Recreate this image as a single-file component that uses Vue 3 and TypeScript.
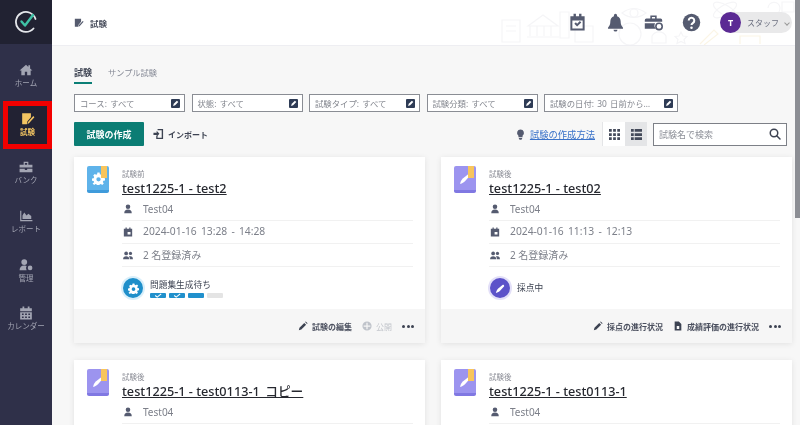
<template>
  <div class="app">
    <aside class="side">
      <div class="logo">
        <svg width="24" height="24" viewBox="0 0 24 24" fill="none">
          <path d="M19.5 18.5A10 10 0 1 1 21.5 9" stroke="#e4e6ea" stroke-width="1.8" stroke-linecap="round" />
          <path d="M7.5 11.5l3.5 4L19 5" stroke="#3fc2a6" stroke-width="2.4" stroke-linecap="round" stroke-linejoin="round" />
        </svg>
      </div>
      <nav class="nav">
        <a v-for="item in navItems" :key="item.label" class="nav-item" :class="{ active: item.active }">
          <svg width="14" height="14" viewBox="0 0 24 24" fill="currentColor"><path :d="item.icon" /></svg>
          <span>{{ item.label }}</span>
        </a>
      </nav>
    </aside>

    <div class="main">
      <header class="top">
        <svg class="doodles" width="300" height="45" viewBox="0 0 300 45" fill="none" stroke="#f5f5f7" stroke-width="1.2">
          <path d="M28 26l15-11 15 11zM30 26v10M37 26v10M44 26v10M51 26v10M27 37h32" />
          <path d="M2 20h18v22H2zM6 26h10M6 31h10" />
          <path d="M60 12h9v26h-9zM75 26h18v16H75z" />
          <path d="M122 13q12-9 24 0q-12 9-24 0z" /><circle cx="134" cy="13" r="4" />
          <circle cx="130" cy="34" r="11" />
          <path d="M152 36a8 8 0 0 1 14 0v7h-14z" />
          <path d="M200 44l14-14 4 4-14 11" stroke="#fbf5e6" />
          <path d="M181 32l2 4 4 .5-3 3 1 4-4-2-4 2 1-4-3-3 4-.5z" />
          <ellipse cx="225" cy="10" rx="13" ry="5" transform="rotate(30 225 10)" />
          <ellipse cx="225" cy="10" rx="13" ry="5" transform="rotate(-30 225 10)" />
          <path d="M268 8a6 6 0 1 1 8 6M282 2h12v10h-12z" />
          <path d="M240 44v-8h20v8" stroke="#fbf5e6" />
        </svg>
        <div class="crumb">
          <svg width="10" height="10" viewBox="0 0 24 24" fill="#555b6e"><path :d="icons.exam" /></svg>
          <span>試験</span>
        </div>
        <div class="top-right">
          <svg class="top-icon" width="19" height="19" viewBox="0 0 24 24" fill="#555b70">
            <path d="M7 1h3v3h4V1h3v3h4v18H3V4h4zM5.500 9.500v10h13v-10zM8 13.500l2-1.700 1.500 1.700 3.500-3.300 1.800 1.700-5.300 5z" fill-rule="evenodd" />
          </svg>
          <svg class="top-icon" width="19" height="19" viewBox="0 0 24 24" fill="#555b70">
            <path d="M12 1a2 2 0 0 1 2 2v1c3 .8 4.500 3.500 4.500 6.500 0 4 1 6 3 8v1.500h-19V18.500c2-2 3-4 3-8C5.500 7.500 7 4.800 10 4V3a2 2 0 0 1 2-2zM9.500 21h5a2.500 2.500 0 0 1-5 0z" />
          </svg>
          <svg class="top-icon" width="19" height="19" viewBox="0 0 24 24" fill="#555b70">
            <path d="M8 3h8v4h5a2 2 0 0 1 2 2v2H1V9a2 2 0 0 1 2-2h5zM10 5v2h4V5zM1 13h13a6 6 0 0 0 1 7H1z" />
            <circle cx="19" cy="17" r="4" fill="none" stroke="#555b70" stroke-width="2" />
          </svg>
          <svg class="top-icon" width="19" height="19" viewBox="0 0 24 24">
            <circle cx="12" cy="12" r="11" fill="#555b70" />
            <path d="M8.500 9.500a3.500 3.500 0 1 1 5.500 3c-1.300.9-2 1.400-2 2.800" fill="none" stroke="#fff" stroke-width="2.600" />
            <circle cx="12" cy="18.500" r="1.600" fill="#fff" />
          </svg>
          <div class="user">
            <span class="avatar">T</span>
            <span class="user-name">スタッフ</span>
            <span class="caret"></span>
          </div>
        </div>
      </header>

      <section class="content">
        <div class="tabs">
          <span class="tab on">試験</span>
          <span class="tab">サンプル試験</span>
        </div>

        <div class="filters">
          <div v-for="f in filters" :key="f.text" class="filter" :style="{ width: f.width + 'px' }">
            <span class="filter-text">{{ f.text }}</span>
            <span class="filter-icon">
              <svg width="7" height="7" viewBox="0 0 10 10"><path d="M1.500 8.500l1-3L7 1l2 2-4.500 4.500z" fill="#fff" /></svg>
            </span>
          </div>
        </div>

        <div class="toolbar">
          <button class="create">試験の作成</button>
          <span class="import">
            <svg width="11" height="12" viewBox="0 0 24 24" fill="#3d4352">
              <path d="M10 1h12v22H7v-7h3v4h9V4h-9zM1 9h7V5l6 6.500L8 18v-4H1z" />
            </svg>
            インポート
          </span>
          <div class="tools">
            <svg width="9" height="11" viewBox="0 0 18 24" fill="#555b70">
              <path d="M9 1a7.500 7.500 0 0 1 4.500 13.500V18h-9v-3.500A7.500 7.500 0 0 1 9 1zM5.500 19.500h7V22l-2 1.500h-3l-2-1.500z" />
            </svg>
            <a class="howto">試験の作成方法</a>
            <div class="view-toggle">
              <span class="view">
                <svg width="11" height="11" viewBox="0 0 12 12" fill="#444a5a"><path d="M0 0h3v3H0zM4.500 0h3v3h-3zM9 0h3v3H9zM0 4.500h3v3H0zM4.500 4.500h3v3h-3zM9 4.500h3v3H9zM0 9h3v3H0zM4.500 9h3v3h-3zM9 9h3v3H9z" /></svg>
              </span>
              <span class="view sel">
                <svg width="11" height="11" viewBox="0 0 12 12" fill="#444a5a"><path d="M0 0h3v3H0zM4 0h8v3H4zM0 4.500h3v3H0zM4 4.500h8v3H4zM0 9h3v3H0zM4 9h8v3H4z" /></svg>
              </span>
            </div>
            <div class="search">
              <span>試験名で検索</span>
              <svg width="12" height="12" viewBox="0 0 24 24" fill="none" stroke="#3d4352" stroke-width="3">
                <circle cx="10" cy="10" r="7.500" /><path d="M15.500 15.500L22 22" stroke-linecap="round" />
              </svg>
            </div>
          </div>
        </div>

        <div class="cards">
          <article v-for="c in cards" :key="c.title" class="card">
            <div class="card-body">
              <span class="book" :class="c.kind">
                <i class="mark"></i>
                <svg v-if="c.kind === 'before'" width="13" height="13" viewBox="0 0 24 24" fill="#fff"><path :d="icons.gear" fill-rule="evenodd" /></svg>
                <svg v-else width="13" height="13" viewBox="0 0 24 24" fill="#fff"><path d="M2 22c1-5 3-8 5-10L17 4c2 0 3 1 3 3l-9 10c-2 2-5 4-9 5z" /></svg>
              </span>
              <div class="info">
                <div class="state">{{ c.state }}</div>
                <a class="title">{{ c.title }}</a>
                <ul class="rows">
                  <li>
                    <svg width="10" height="10" viewBox="0 0 24 24" fill="#555b70"><path :d="icons.user" /></svg>
                    <span>Test04</span>
                  </li>
                  <li v-if="c.date" class="row-date">
                    <svg width="10" height="10" viewBox="0 0 24 24" fill="#555b70"><path d="M6 1h3v3h6V1h3v3h4v19H2V4h4zM11 12h7v6h-7z" fill-rule="evenodd" /></svg>
                    <span>{{ c.date }}</span>
                  </li>
                  <li v-if="c.date" class="row-people">
                    <svg width="10" height="9" viewBox="0 0 24 22" fill="#555b70"><circle cx="7.500" cy="6" r="4.500" /><circle cx="18" cy="6" r="4" /><path d="M0 20c0-5 3-7 7.500-7s7.500 2 7.500 7zM16.500 20c0-3-.8-5-2.500-6.500 1-.5 2.500-.5 4-.5 4 0 6 2 6 7z" /></svg>
                    <span>2 名登録済み</span>
                  </li>
                </ul>
                <div v-if="c.progress" class="progress">
                  <span class="badge" :class="c.kind">
                    <svg v-if="c.kind === 'before'" width="11" height="11" viewBox="0 0 24 24" fill="#fff"><path :d="icons.gear" fill-rule="evenodd" /></svg>
                    <svg v-else width="11" height="11" viewBox="0 0 24 24" fill="#fff"><path d="M2 22c1-5 3-8 5-10L17 4c2 0 3 1 3 3l-9 10c-2 2-5 4-9 5z" /></svg>
                  </span>
                  <div class="progress-text">
                    <div>{{ c.progress }}</div>
                    <div v-if="c.steps" class="steps">
                      <i v-for="s in c.steps" :key="s.id" :class="s.cls">
                        <svg v-if="s.cls === 'done'" width="8" height="5" viewBox="0 0 10 6" fill="none" stroke="#fff" stroke-width="1.400"><path d="M1.500 3l2.500 2L9 1" /></svg>
                      </i>
                    </div>
                  </div>
                </div>
              </div>
            </div>
            <footer class="card-foot">
              <span v-for="a in c.actions" :key="a.text" class="action" :class="{ off: a.off }">
                <svg width="10" height="10" viewBox="0 0 24 24" :fill="a.off ? '#bfc3ca' : '#3d4352'"><path :d="a.icon" /></svg>
                {{ a.text }}
              </span>
              <span class="dots"><i></i><i></i><i></i></span>
            </footer>
          </article>
        </div>
      </section>
    </div>

    <div class="scroll-thumb"></div>
  </div>
</template>

<script setup lang="ts">
interface Action { text: string; icon: string; off?: boolean }
interface Step { id: number; cls: string }
interface Card {
  kind: string
  state: string
  title: string
  date?: string
  progress?: string
  steps?: Step[]
  actions: Action[]
}

const pen = 'M2 22l1.500-6L15 4.500l4.500 4.500L8 20.500zM17 2.500l1.500-1.500 4.500 4.500L21.500 7z'
const icons = {
  exam: 'M2 2h15v7l-6 7-1 5H2zM23 9l-9 10-3 2 1-4 9-10z',
  user: 'M12 1a5.500 5.500 0 1 1 0 11 5.500 5.500 0 0 1 0-11zM3 22c0-6 3-9 9-9s9 3 9 9z',
  gear: 'M10 1h4l.6 3 2.400 1 2.500-1.700 2.800 2.800L20 8.600l1 2.400 3 .6v4l-3 .6-1 2.400 1.700 2.500-2.800 2.800-2.500-1.700-2.400 1-.6 3h-4l-.6-3-2.400-1-2.500 1.700-2.800-2.800L4 19.100 3 16.700l-3-.6v-4l3-.6 1-2.400-1.700-2.500 2.800-2.800L7.600 5l1.800-1zM12 9.500a4 4 0 1 0 0 8 4 4 0 0 0 0-8z',
}

const navItems = [
  { label: 'ホーム', icon: 'M12 3L1 13h3v8h6v-6h4v6h6v-8h3l-4-3.600V4h-3v2.700z' },
  { label: '試験', icon: icons.exam, active: true },
  { label: 'バンク', icon: 'M8 3h8v5h7v5H1V8h7zM10 5v3h4V5zM1 15h9v2h4v-2h9v6H1z' },
  { label: 'レポート', icon: 'M2 3h2v16h19v2H2zM6 17v-6l3-5 4 5 3-3 5 4v5z' },
  { label: '管理', icon: 'M9 2a5 5 0 1 1 0 10A5 5 0 0 1 9 2zM1 21c0-5 3-8 8-8 2 0 3 .4 4 1a6 6 0 0 0 0 7zM19 13a4 4 0 1 1 0 8 4 4 0 0 1 0-8z' },
  { label: 'カレンダー', icon: 'M6 1h3v3h6V1h3v3h4v5H2V4h4zM2 10.500h20V23H2zM5 13v2.500h3V13zM10.500 13v2.500h3V13zM16 13v2.500h3V13zM5 18v2.500h3V18zM10.500 18v2.500h3V18zM16 18v2.500h3V18z' },
]

const filters = [
  { text: 'コース: すべて', width: 111 },
  { text: '状態: すべて', width: 111 },
  { text: '試験タイプ: すべて', width: 111 },
  { text: '試験分類: すべて', width: 111 },
  { text: '試験の日付: 30 日前から…', width: 134 },
]

const steps: Step[] = [
  { id: 1, cls: 'done' },
  { id: 2, cls: 'done' },
  { id: 3, cls: 'now' },
  { id: 4, cls: 'todo' },
]

const cards: Card[] = [
  {
    kind: 'before',
    state: '試験前',
    title: 'test1225-1 - test2',
    date: '2024-01-16 13:28 - 14:28',
    progress: '問題集生成待ち',
    steps,
    actions: [
      { text: '試験の編集', icon: pen },
      { text: '公開', icon: 'M12 1a11 11 0 1 1 0 22 11 11 0 0 1 0-22zM10.500 4v6.500H4v3h6.500V20h3v-6.500H20v-3h-6.500V4z', off: true },
    ],
  },
  {
    kind: 'after',
    state: '試験後',
    title: 'test1225-1 - test02',
    date: '2024-01-16 11:13 - 12:13',
    progress: '採点中',
    actions: [
      { text: '採点の進行状況', icon: pen },
      { text: '成績評価の進行状況', icon: 'M4 1h10l6 6v16H4zM9 12v7h6v-7z' },
    ],
  },
  { kind: 'after', state: '試験後', title: 'test1225-1 - test0113-1_コピー', actions: [] },
  { kind: 'after', state: '試験後', title: 'test1225-1 - test0113-1', actions: [] },
]
</script>

<style>
html, body { margin: 0; overflow: hidden; }
</style>

<style scoped>
.app {
  position: relative;
  display: flex;
  width: 800px;
  height: 425px;
  overflow: hidden;
  background: #f7f7f7;
  color: #3d4352;
  font-family: "Noto Sans", "Noto Sans CJK JP", sans-serif;
  font-size: 9px;
  filter: blur(0.4px);
}
.side {
  flex: none;
  width: 52px;
  background: #2f3049;
  display: flex;
  flex-direction: column;
}
.logo {
  height: 44px;
  background: #212232;
  display: flex;
  align-items: center;
  justify-content: center;
}
.nav { padding-top: 8px; }
.nav-item {
  box-sizing: border-box;
  height: 48.6px;
  display: flex;
  flex-direction: column;
  align-items: center;
  justify-content: center;
  gap: 1px;
  color: #a3a5b3;
  font-size: 7.500px;
  line-height: 11px;
  white-space: nowrap;
}
.nav-item.active {
  margin-left: 3px;
  border: 5px solid #f20000;
  background: #222233;
  color: #f2c462;
  font-weight: 700;
}
.main {
  flex: 1;
  min-width: 0;
  display: flex;
  flex-direction: column;
}
.top {
  position: relative;
  flex: none;
  box-sizing: border-box;
  height: 46px;
  background: #fff;
  border-bottom: 1px solid #eeeef2;
  display: flex;
  align-items: center;
  justify-content: space-between;
  padding: 0 8px 0 22px;
}
.doodles {
  position: absolute;
  right: 0;
  top: 0;
}
.crumb {
  display: flex;
  align-items: center;
  gap: 6px;
  font-size: 8.500px;
  font-weight: 700;
  color: #4a4f5e;
}
.top-right {
  position: relative;
  display: flex;
  align-items: center;
}
.top-icon { margin-right: 19px; }
.user {
  display: flex;
  align-items: center;
  width: 72px;
  height: 21px;
  border-radius: 11px;
  background: #e9e9ea;
}
.avatar {
  flex: none;
  width: 21px;
  height: 21px;
  border-radius: 50%;
  background: #5b2a94;
  color: #fff;
  font-size: 9px;
  font-weight: 700;
  line-height: 21px;
  text-align: center;
}
.user-name {
  margin-left: 6px;
  font-size: 8px;
  color: #6c7080;
}
.caret {
  width: 3px;
  height: 3px;
  margin-left: 6px;
  border-right: 1px solid #999;
  border-bottom: 1px solid #999;
  transform: rotate(45deg);
}
.content {
  flex: 1;
  min-height: 0;
  padding: 20px 8px 0 22px;
}
.tabs {
  display: flex;
  gap: 16px;
  height: 17px;
  font-size: 8.200px;
  line-height: 14px;
  color: #868a96;
}
.tab.on {
  height: 16px;
  font-size: 9px;
  font-weight: 700;
  color: #3d4352;
  border-bottom: 2px solid #0b7f76;
}
.filters {
  display: flex;
  gap: 6.500px;
  margin-top: 11px;
}
.filter {
  box-sizing: border-box;
  height: 18px;
  padding: 0 4px 0 5px;
  display: flex;
  align-items: center;
  justify-content: space-between;
  background: #fff;
  border: 1.500px solid #8a8d94;
  font-size: 8.400px;
  color: #84878f;
  white-space: nowrap;
}
.filter-text { word-spacing: 1px; }
.filter-icon {
  width: 9px;
  height: 9px;
  background: #2e3b55;
  border-radius: 1px;
  display: flex;
  align-items: center;
  justify-content: center;
}
.toolbar {
  display: flex;
  align-items: center;
  margin-top: 10px;
  padding-right: 5px;
}
.create {
  width: 70px;
  height: 24px;
  border: 0;
  border-radius: 1px;
  background: #0b7d74;
  color: #fff;
  font: 700 9px "Noto Sans", "Noto Sans CJK JP", sans-serif;
}
.import {
  margin-left: 9px;
  display: flex;
  align-items: center;
  gap: 4px;
  font-size: 8px;
  font-weight: 700;
}
.tools {
  margin-left: auto;
  display: flex;
  align-items: center;
}
.howto {
  margin-left: 5px;
  color: #3b73c9;
  font-size: 9.300px;
  text-decoration: underline;
}
.view-toggle {
  display: flex;
  margin-left: 7px;
  height: 24px;
  background: #e4e5e7;
  padding-left: 1px;
}
.view {
  width: 22px;
  display: flex;
  align-items: center;
  justify-content: center;
  background: #fff;
}
.view.sel { background: #e4e5e7; }
.search {
  box-sizing: border-box;
  width: 134px;
  height: 23px;
  margin-left: 6px;
  padding: 0 5px;
  display: flex;
  align-items: center;
  justify-content: space-between;
  background: #fff;
  border: 1.500px solid #7d8087;
  font-size: 9px;
  color: #8d9098;
}
.cards {
  display: grid;
  grid-template-columns: 351px 351px;
  gap: 17px 16px;
  margin-top: 11px;
}
.card {
  min-height: 186px;
  display: flex;
  flex-direction: column;
  background: #fff;
  box-shadow: 0 1px 6px rgba(0, 0, 0, 0.09);
}
.card-body {
  flex: 1;
  display: flex;
  gap: 13px;
  padding: 9px 12px 0 13px;
}
.book {
  position: relative;
  flex: none;
  box-sizing: border-box;
  width: 22px;
  height: 27px;
  border-radius: 2px;
  border-bottom: 3px solid #3f9bdb;
  background: #5fb3ea;
  display: flex;
  align-items: center;
  justify-content: center;
}
.book.after {
  background: #9c94ef;
  border-bottom-color: #8078e2;
}
.mark {
  position: absolute;
  top: 0;
  right: 2px;
  width: 6px;
  height: 12px;
  background: #f8c55c;
}
.info {
  flex: 1;
  min-width: 0;
}
.state {
  margin-top: 3px;
  font-size: 7.500px;
  line-height: 11px;
  color: #8b8d96;
}
.title {
  display: inline-block;
  font-size: 12.700px;
  font-weight: 500;
  line-height: 16px;
  color: #26282f;
  text-decoration: underline;
}
.rows {
  list-style: none;
  margin: 2px 0 0;
  padding: 0;
}
.rows li {
  height: 22px;
  display: flex;
  align-items: center;
  gap: 10px;
  padding-left: 1px;
  border-bottom: 1px solid #f1f1f1;
  font-size: 10px;
  color: #7d808a;
}
.row-date span {
  margin-top: -3px;
  font-size: 10.300px;
  word-spacing: 1.500px;
}
.row-people span { margin-top: -1px; }
.progress {
  display: flex;
  align-items: center;
  gap: 7px;
  margin-top: 11px;
  font-size: 8.700px;
  color: #3d4352;
}
.badge {
  flex: none;
  width: 20px;
  height: 20px;
  margin-left: 1px;
  border-radius: 50%;
  background: #1f8fca;
  box-shadow: 0 0 0 2px #d9effa;
  display: flex;
  align-items: center;
  justify-content: center;
}
.badge.after {
  background: #5c52c9;
  box-shadow: 0 0 0 2px #e3e0f8;
}
.progress-text { line-height: 12px; }
.steps {
  display: flex;
  gap: 3px;
  margin-top: 2px;
}
.steps i {
  width: 16px;
  height: 5px;
  border-radius: 1px;
  display: flex;
  align-items: center;
  justify-content: center;
}
.steps .done, .steps .now { background: #2190cc; }
.steps .todo { background: #e4e4e4; }
.card-foot {
  flex: none;
  box-sizing: border-box;
  height: 34px;
  padding: 0 11px 0 0;
  display: flex;
  align-items: center;
  justify-content: flex-end;
  gap: 10px;
  background: #f6f6f6;
}
.action {
  display: flex;
  align-items: center;
  gap: 4px;
  font-size: 8px;
  font-weight: 700;
  color: #4a4f5e;
}
.action.off {
  color: #c3c6cc;
  font-weight: 400;
}
.dots {
  display: flex;
  gap: 1.500px;
}
.dots i {
  width: 3px;
  height: 3px;
  border-radius: 50%;
  background: #3d4352;
}
.scroll-thumb {
  position: absolute;
  right: 0;
  top: 0;
  width: 5px;
  height: 218px;
  background: #8c8e94;
}
</style>
